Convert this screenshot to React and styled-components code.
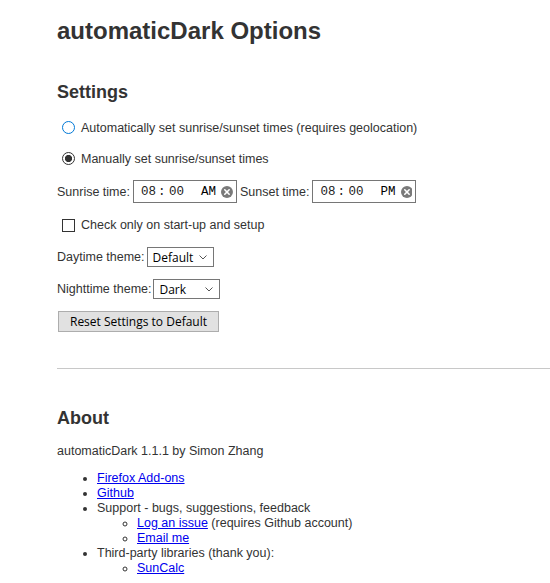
import React from "react";
import styled, { createGlobalStyle } from "styled-components";

const GlobalStyle = createGlobalStyle`
  html, body {
    margin: 0;
    background: #fff;
  }
  body {
    font-family: "Liberation Sans", Arial, sans-serif;
    font-size: 12.5px;
    color: #333;
  }
`;

const Page = styled.main`
  padding: 17px 0 20px 57px;
`;

const Title = styled.h1`
  margin: 0;
  font-size: 24px;
  line-height: 28px;
  font-weight: bold;
`;

const SectionTitle = styled.h2`
  margin: ${(p) => p.$top}px 0 0;
  font-size: 18px;
  line-height: 22px;
  font-weight: bold;
`;

const Form = styled.div`
  display: flex;
  flex-direction: column;
  gap: 12px;
  margin-top: 15px;
`;

const Row = styled.div`
  display: flex;
  align-items: center;
  gap: ${(p) => p.$gap || 3}px;
  height: ${(p) => p.$h || 20}px;
  white-space: nowrap;
`;

const CheckRow = styled.label`
  display: flex;
  align-items: center;
  height: ${(p) => p.$h || 20}px;
  white-space: nowrap;
`;

const Radio = styled.input.attrs({ type: "radio", name: "mode" })`
  appearance: none;
  box-sizing: border-box;
  width: 13px;
  height: 13px;
  margin: 0 6px 0 5px;
  border: 1px solid #0078d7;
  border-radius: 50%;
  background: #fff;

  &:checked {
    border-color: #333;
    background: radial-gradient(circle, #333 0 3.3px, #fff 3.9px);
  }
`;

const Checkbox = styled.input.attrs({ type: "checkbox" })`
  appearance: none;
  box-sizing: border-box;
  width: 13px;
  height: 13px;
  margin: 0 6px 0 5px;
  border: 1px solid #333;
  background: #fff;
`;

const TimeBox = styled.div`
  display: flex;
  align-items: center;
  box-sizing: border-box;
  width: 104px;
  height: 23px;
  padding: 0 3px 0 7px;
  border: 1px solid #767676;
  background: #fff;
  font-family: "Liberation Mono", "Courier New", monospace;
  font-size: 12.5px;
  color: #222;
`;

const Sep = styled.span`
  margin: 0 3.5px 0 2px;
`;

const Meridiem = styled.span`
  margin: 0 5px 0 17px;
  color: #000;
`;

const ClearIcon = () => (
  <svg width="12" height="12" viewBox="0 0 12 12">
    <circle cx="6" cy="6" r="6" fill="#7a7a7a" />
    <path d="M3.8 3.8 L8.2 8.2 M8.2 3.8 L3.8 8.2" stroke="#fff" strokeWidth="1.6" strokeLinecap="round" />
  </svg>
);

const TimeInput = ({ value, meridiem }) => {
  const [h, m] = value.split(":");
  return (
    <TimeBox>
      <span>{h}</span>
      <Sep>:</Sep>
      <span>{m}</span>
      <Meridiem>{meridiem}</Meridiem>
      <ClearIcon />
    </TimeBox>
  );
};

const SelectWrap = styled.span`
  position: relative;
  display: inline-block;
  height: 20px;
`;

const Select = styled.select`
  appearance: none;
  box-sizing: border-box;
  width: 67px;
  height: 20px;
  margin: 0;
  padding: 0 0 0 5px;
  border: 1px solid #767676;
  border-radius: 0;
  background: #fff;
  font-family: "Open Sans", "Noto Sans", sans-serif;
  font-size: 12px;
  color: #000;
`;

const Chevron = styled.svg`
  position: absolute;
  right: 7px;
  top: 8px;
  pointer-events: none;
`;

const ThemeSelect = ({ value, options }) => (
  <SelectWrap>
    <Select defaultValue={value}>
      {options.map((o) => (
        <option key={o}>{o}</option>
      ))}
    </Select>
    <Chevron width="8" height="5" viewBox="0 0 8 5">
      <polyline points="0.5,0.5 4,4 7.5,0.5" fill="none" stroke="#555" strokeWidth="1" />
    </Chevron>
  </SelectWrap>
);

const Button = styled.button`
  box-sizing: border-box;
  width: 161px;
  height: 21px;
  margin: 0 0 0 1px;
  padding: 0;
  border: 1px solid #adadad;
  background: #e1e1e1;
  font-family: "Open Sans", "Noto Sans", sans-serif;
  font-size: 12px;
  color: #000;
`;

const Rule = styled.hr`
  margin: 36px 0 0;
  height: 0;
  border: 0;
  border-top: 1px solid #c8c8c8;
`;

const Intro = styled.p`
  margin: 14.5px 0 0;
  line-height: 15px;
`;

const List = styled.ul`
  margin: ${(p) => (p.$nested ? 0 : 12)}px 0 0;
  padding-left: 40px;
  line-height: 15px;
  list-style: ${(p) => (p.$nested ? "circle" : "disc")};
`;

const Link = styled.a`
  color: #0000ee;
  text-decoration: underline;
`;

export default function App() {
  return (
    <Page>
      <GlobalStyle />
      <Title>automaticDark Options</Title>

      <SectionTitle $top={36}>Settings</SectionTitle>
      <Form>
        <CheckRow $h={19}>
          <Radio />
          Automatically set sunrise/sunset times (requires geolocation)
        </CheckRow>
        <CheckRow $h={19}>
          <Radio defaultChecked />
          Manually set sunrise/sunset times
        </CheckRow>
        <Row $h={23}>
          <span>Sunrise time:</span>
          <TimeInput value="08:00" meridiem="AM" />
          <span>Sunset time:</span>
          <TimeInput value="08:00" meridiem="PM" />
        </Row>
        <CheckRow>
          <Checkbox />
          Check only on start-up and setup
        </CheckRow>
        <Row $gap={2}>
          <span>Daytime theme:</span>
          <ThemeSelect value="Default" options={["Default", "Light", "Dark"]} />
        </Row>
        <Row $gap={2}>
          <span>Nighttime theme:</span>
          <ThemeSelect value="Dark" options={["Default", "Light", "Dark"]} />
        </Row>
        <Row $h={21}>
          <Button>Reset Settings to Default</Button>
        </Row>
      </Form>

      <Rule />

      <SectionTitle $top={38}>About</SectionTitle>
      <Intro>automaticDark 1.1.1 by Simon Zhang</Intro>
      <List>
        <li>
          <Link href="#">Firefox Add-ons</Link>
        </li>
        <li>
          <Link href="#">Github</Link>
        </li>
        <li>
          Support - bugs, suggestions, feedback
          <List $nested>
            <li>
              <Link href="#">Log an issue</Link> (requires Github account)
            </li>
            <li>
              <Link href="#">Email me</Link>
            </li>
          </List>
        </li>
        <li>
          Third-party libraries (thank you):
          <List $nested>
            <li>
              <Link href="#">SunCalc</Link>
            </li>
          </List>
        </li>
      </List>
    </Page>
  );
}
